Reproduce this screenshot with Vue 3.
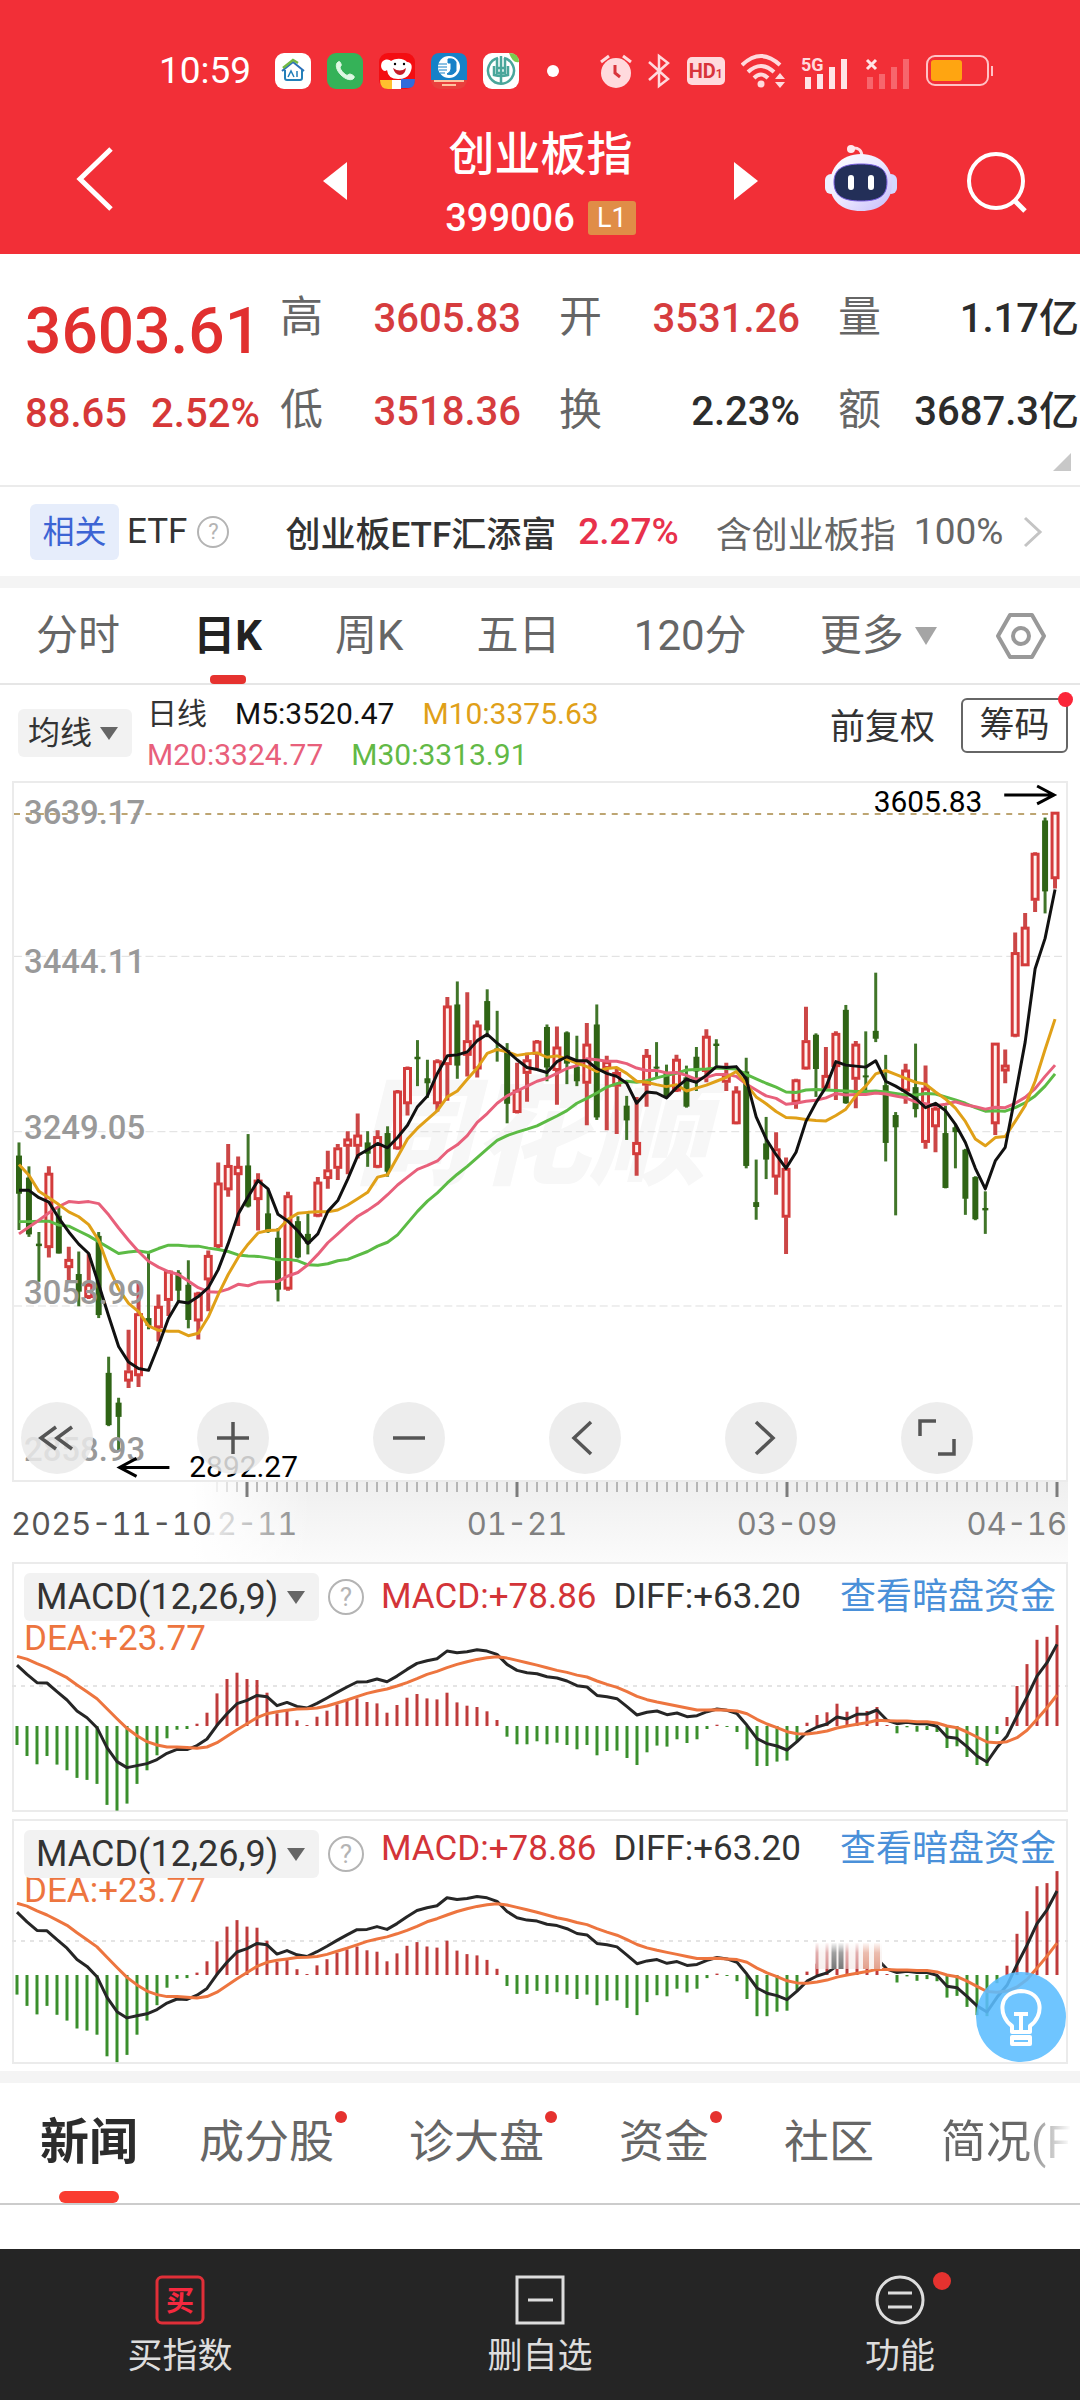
<script setup>
import { ref } from 'vue'

const STEP = 10
const FIRST = 5
const px = i => FIRST + i * STEP

// direction, high, body top, body bottom, low (chart levels, growing downwards)
const rawCandles = [
  ['g',755,782,860,934],['g',804,827,943,948],['g',938,962,967,1040],['r',804,818,970,990],['g',885,905,982,982],
  ['r',968,994,1011,1040],['g',978,1024,1060,1090],['r',983,1045,1072,1075],['g',938,946,1108,1114],['g',1193,1226,1333,1335],
  ['g',1277,1287,1316,1385],['r',1138,1222,1243,1257],['r',1040,1105,1232,1255],['g',978,1114,1130,1137],['r',1066,1090,1134,1162],
  ['r',1016,1018,1078,1110],['g',1016,1021,1058,1080],['g',996,1046,1118,1135],['r',1060,1063,1120,1158],['r',976,986,1036,1100],
  ['r',796,838,968,972],['r',758,802,852,866],['r',784,804,821,926],['g',738,802,886,888],['r',818,832,872,935],
  ['g',852,900,938,940],['g',930,950,1056,1080],['r',856,864,1055,1058],['g',906,916,990,992],['g',900,942,962,984],
  ['r',826,836,906,908],['r',772,811,829,850],['r',758,766,808,832],['r',732,748,763,820],['r',696,740,763,788],
  ['g',732,755,778,805],['r',730,743,806,808],['g',722,736,815,825],['r',648,650,768,770],['r',600,602,676,700],
  ['g',546,580,585,640],['g',586,624,634,664],['r',585,588,676,692],['r',458,476,596,670],['g',426,473,598,625],
  ['r',448,547,577,620],['r',506,515,605,622],['g',442,466,526,540],['g',486,563,568,590],['g',552,566,676,716],
  ['r',592,648,694,696],['r',572,586,614,672],['r',546,548,575,604],['g',514,519,602,630],['r',518,560,608,678],
  ['g',528,530,594,636],['g',537,600,630,640],['r',511,554,634,720],['g',473,514,704,709],['r',578,590,604,730],
  ['r',605,612,640,738],['g',660,680,710,750],['r',662,755,780,823],['r',564,577,638,682],['g',550,600,604,624],
  ['g',596,612,660,664],['r',576,585,650,652],['g',598,622,682,684],['g',560,580,610,650],['r',524,538,610,632],
  ['g',544,553,558,598],['r',592,618,632,650],['r',640,650,717,718],['g',582,610,803,808],['g',790,877,887,913],
  ['g',703,757,790,830],['r',734,768,826,862],['r',786,808,908,983],['r',625,627,673,686],['r',478,547,605,606],
  ['g',532,535,605,662],['r',560,618,644,648],['r',528,532,600,668],['g',474,484,675,676],['r',548,554,626,685],
  ['g',528,618,622,648],['g',408,527,543,550],['g',576,638,756,794],['g',693,699,724,904],['r',594,607,650,676],
  ['g',553,642,687,704],['r',598,644,755,768],['r',680,685,723,775],['g',680,736,848,849],['g',718,724,734,808],
  ['g',768,770,870,903],['g',824,826,912,914],['g',855,889,894,942],['r',552,552,717,740],['r',565,597,609,634],
  ['r',326,367,538,540],['r',286,315,394,394],['r',162,164,260,284],['g',91,97,242,287],['r',80,80,216,236]
]
const ma5 = [853,853,868,877,910,938,963,982,1045,1110,1172,1204,1217,1221,1170,1115,1080,1083,1070,1052,1015,962,902,866,833,850,902,916,936,962,942,896,874,830,782,770,757,766,745,720,682,660,614,578,576,570,547,534,552,568,586,602,606,612,590,580,588,588,604,614,620,634,675,652,654,664,643,626,632,618,600,602,600,625,703,748,780,808,775,712,674,642,590,597,599,601,588,630,640,652,665,684,675,690,718,755,808,850,793,765,660,550,400,338,238]
const ma10 = [800,822,855,868,882,897,907,923,955,1010,1055,1084,1101,1130,1139,1141,1141,1150,1145,1112,1066,1025,990,963,940,935,934,912,900,898,897,897,893,883,870,857,826,821,785,748,726,708,690,662,650,626,603,573,565,570,577,574,572,581,578,585,593,600,610,604,602,614,630,632,637,641,637,650,644,638,630,622,610,636,662,676,692,704,705,708,710,711,700,687,660,640,615,608,616,624,632,636,652,666,685,712,748,762,745,743,712,680,630,565,503]
const ma20 = [942,928,914,899,886,876,878,876,880,903,930,955,978,998,1010,1019,1025,1038,1052,1060,1061,1055,1045,1048,1041,1040,1039,1028,1021,1005,984,960,942,923,906,894,880,862,842,826,810,802,793,773,760,741,714,696,675,660,650,640,630,624,614,604,598,584,586,589,589,594,603,608,608,613,612,618,626,622,616,616,620,636,648,660,665,677,675,671,669,664,655,658,657,657,654,656,660,664,672,676,680,677,672,678,682,687,683,684,675,663,645,620,597]
const ma30 = [917,917,916,916,924,926,936,946,958,970,982,979,977,980,972,965,965,967,967,971,974,978,985,987,988,991,995,994,997,1005,1006,1003,997,994,986,978,967,959,944,920,896,875,858,838,820,804,786,768,751,741,734,728,721,711,701,690,675,665,654,642,635,630,632,629,623,618,614,607,606,605,603,604,605,616,625,634,642,652,653,648,647,648,649,650,651,651,650,652,655,658,658,655,656,662,668,675,684,691,690,691,684,674,660,640,615]

const level = v => Math.round((v * 0.4911 - 10) * 10) / 10
const candles = rawCandles.map(([dir, h, t, b, l], i) => ({
  dir, x: px(i), high: level(h), top: level(t), bottom: level(b), low: level(l)
}))
const line = (values, y) => values.map((v, i) => `${px(i)},${y(v)}`).join(' ')
const averages = [
  { color: '#5cbb45', points: line(ma30, level) },
  { color: '#e8607b', points: line(ma20, level) },
  { color: '#e0a018', points: line(ma10, level) },
  { color: '#111', points: line(ma5, level) }
]

const hist = [-57,-90,-115,-90,-116,-133,-156,-162,-174,-237,-254,-233,-174,-133,-88,-37,-11,-9,7,40,98,141,160,141,138,100,38,45,17,3,28,46,65,75,83,72,68,40,63,85,96,83,80,100,71,61,57,44,18,-32,-55,-55,-46,-55,-50,-57,-70,-57,-88,-75,-74,-96,-117,-79,-59,-62,-40,-51,-40,-9,4,-3,-18,-70,-120,-120,-107,-104,-45,10,33,41,67,43,58,45,57,3,-22,-4,-17,-12,-18,-66,-61,-93,-117,-120,-24,27,120,186,259,268,303]
const diff = [372,400,425,426,452,477,510,530,560,620,662,680,674,668,656,637,625,626,614,594,553,518,488,478,463,467,494,484,496,501,487,471,454,438,423,422,414,422,405,385,367,359,353,330,335,332,326,330,340,370,388,395,398,407,411,420,434,438,463,467,473,497,522,514,510,521,516,527,524,512,504,508,518,553,593,608,615,627,602,573,558,549,528,534,520,519,507,538,548,544,548,548,556,588,592,617,645,663,620,585,525,468,405,365,310]
const dea = [346,354,368,380,395,410,432,452,473,503,533,562,584,602,612,618,618,620,622,618,605,586,566,548,530,518,512,508,504,503,501,495,486,477,467,457,450,444,435,425,413,400,391,380,370,362,355,350,347,351,358,365,372,380,388,394,402,408,420,430,439,452,466,476,483,489,495,501,507,507,506,508,510,518,535,549,560,572,578,579,575,570,561,555,550,545,538,539,540,540,542,542,546,555,560,573,588,603,605,602,590,568,535,500,462]

const makeMacd = (id, height, zero, mid, k) => {
  const y = v => Math.round((zero + (v - 555) * k) * 10) / 10
  return {
    id, height, zero, mid,
    bars: hist.map((v, i) => ({ x: px(i), y: Math.round((zero - v * k) * 10) / 10, color: v > 0 ? '#bf3b3b' : '#3a8f2c' })),
    diff: line(diff, y),
    dea: line(dea, y)
  }
}
const macds = [makeMacd('first', 250, 164, 124, 0.333), makeMacd('second', 245, 156, 122, 0.343)]

const grid = [
  { label: '3639.17', y: 41 }, { label: '3444.11', y: 191 }, { label: '3249.05', y: 357 },
  { label: '3053.99', y: 523 }, { label: '2858.93', y: 681 }
]
const ticks = Array.from({ length: 85 }, (_, k) => k + 20).map(i => ({ x: px(i), major: (i - 23) % 27 === 0, o: i < 23 ? (i - 19) * 0.2 : 1 }))

const quotes = [
  { k: '高', v: '3605.83', up: true }, { k: '开', v: '3531.26', up: true }, { k: '量', v: '1.17亿' },
  { k: '低', v: '3518.36', up: true }, { k: '换', v: '2.23%' }, { k: '额', v: '3687.3亿' }
]
const periods = ['分时', '日K', '周K', '五日', '120分', '更多']
const period = ref('日K')
const news = [
  { t: '新闻' }, { t: '成分股', dot: true }, { t: '诊大盘', dot: true }, { t: '资金', dot: true }, { t: '社区' }, { t: '简况(F' }
]
const section = ref('新闻')
const tools = [
  { n: '最早', d: 'M35 25 L20 36 L35 47 M51 25 L36 36 L51 47' },
  { n: '放大', d: 'M20 36 H52 M36 20 V52' },
  { n: '缩小', d: 'M20 36 H52' },
  { n: '左移', d: 'M42 20 L25 36 L42 52' },
  { n: '右移', d: 'M31 20 L48 36 L31 52' },
  { n: '全屏', d: 'M19 34 V19 H35 M37 52 H53 V37' }
]
</script>

<template>
  <div class="page">
    <header class="top">
      <div class="status">
        <span class="time">10:59</span>
        <div class="apps">
          <svg viewBox="0 0 36 36"><rect width="36" height="36" rx="9" fill="#fff" /><path d="M7 18 L18 9 L29 18" fill="none" stroke="#2b70b8" stroke-width="2" /><path d="M8 15 L18 7 L23 10" fill="none" stroke="#72b944" stroke-width="2.500" /><path d="M10 17 V25 Q10 27 12 27 H25 Q27 27 27 25 V17" fill="none" stroke="#237fb9" stroke-width="2" /><path d="M13 24 L16 18 L19 24 M22 18 V24" fill="none" stroke="#237fb9" stroke-width="1.500" /></svg>
          <svg viewBox="0 0 36 36"><rect width="36" height="36" rx="9" fill="#35b258" /><path d="M11 9 C8 11 9 17 14 22 C19 27 25 28 27 25 C28 23 26 22 23 21 C21 21 21 23 19 22 C16 20 14 17 13 15 C13 13 15 13 14 11 C13 8 12 8 11 9Z" fill="#dff8e4" stroke="#dff8e4" /></svg>
          <svg viewBox="0 0 36 36"><rect width="36" height="36" rx="9" fill="#f40d12" /><path d="M3 9 C7 5 11 7 12 8 C18 4 26 6 28 9 C33 9 34 14 31 20 Q28 26 19 26 Q9 26 8 17 C5 20 0 15 3 9Z" fill="#fff" /><path d="M14 15 Q21 20 27 15 Q26 22 21 22 Q16 22 14 15Z" fill="#c71d28" /><circle cx="16" cy="11" r="1.200" /><circle cx="25" cy="11" r="1.200" /><path d="M1 27 H13 V36 H9 Q1 36 1 27Z" fill="#ffc02e" /><path d="M13 27 H22 V36 H13Z" fill="#fff" /><path d="M22 26 H36 Q36 36 28 35 H22Z" fill="#326cdc" /></svg>
          <svg viewBox="0 0 36 36"><rect width="36" height="36" rx="9" fill="#e8403d" /><path d="M0 27 V9 Q0 0 9 0 H27 Q36 0 36 9 V27Z" fill="#1681c8" /><circle cx="18" cy="14" r="11" fill="#fff" /><path d="M17 6 Q23 5 25 9 V18 Q22 23 16 21 Q20 19 20 16 V10 H17Z M7 11 H16 M7 14 H16 M8 17 H16 M9 20 H14" fill="#1681c8" stroke="#1681c8" stroke-width="1" /><path d="M3 28 H33 M11 32 H25" stroke="#ffc4a0" stroke-width="2" /></svg>
          <svg viewBox="0 0 36 36"><rect width="36" height="36" rx="9" fill="#fff" /><path d="M26 0 Q36 0 36 9 Q30 11 26 0Z" fill="#7acb4e" /><path d="M15 5 A13 13 0 1 0 21 5" fill="none" stroke="#4aa69b" stroke-width="2.500" /><path d="M14 5 V20 H22 V5 M18 3 V31 M11 13 V22 Q18 24 25 22 V13 M14 15 H22" fill="none" stroke="#4aa69b" stroke-width="2.500" /></svg>
        </div>
        <i class="more-dot"></i>
        <div class="signals">
          <svg width="32" height="36" viewBox="0 0 32 36"><circle cx="16" cy="20" r="15" fill="#ffdadd" /><path d="M1 9 L9 3 M23 3 L31 9" stroke="#ffdadd" stroke-width="3" /><path d="M15 12 V20 L20 24" fill="none" stroke="#d8343b" stroke-width="3" /></svg>
          <svg width="22" height="36" viewBox="0 0 22 36"><path d="M1 9 L20 26 L11 33 V3 L20 10 L1 27" fill="none" stroke="#ffdadd" stroke-width="2.500" /></svg>
          <span class="hd">HD<small>1</small></span>
          <svg width="44" height="36" viewBox="0 0 44 36"><path d="M1 12 Q20 -6 39 12 M7 19 Q20 7 33 19 M13 25 Q20 18 27 25" fill="none" stroke="#ffdadd" stroke-width="4" /><circle cx="20" cy="31" r="3.500" fill="#ffdadd" /><path d="M34 26 L39 20 L44 26Z M34 29 L39 35 L44 29Z" fill="#ffdadd" /></svg>
          <svg width="47" height="40" viewBox="0 -4 47 40"><text x="0" y="16" font-size="18" font-weight="700" fill="#ffdadd">5G</text><path d="M7 22 V34 M19 19 V34 M31 12 V34 M43 4 V34" stroke="#ffe4e6" stroke-width="6" /></svg>
          <svg width="45" height="40" viewBox="0 -4 45 40"><path d="M2 5 L11 14 M11 5 L2 14" stroke="#ffe4e6" stroke-width="3" /><path d="M5 22 V34 M17 19 V34 M29 12 V34 M41 4 V34" stroke="#f7666c" stroke-width="6" /></svg>
          <svg width="68" height="32" viewBox="0 0 68 32"><rect x="1" y="1" width="61" height="29" rx="8" fill="none" stroke="#ffc2c6" stroke-width="2" /><rect x="5" y="5" width="31" height="21" rx="3" fill="#ffa511" /><path d="M66 11 V21" stroke="#ffc2c6" stroke-width="2" /></svg>
        </div>
      </div>
      <nav class="bar">
        <button class="ib back" aria-label="返回"><svg width="38" height="66" viewBox="0 0 38 66"><path d="M35 3 L4 33 L35 63" fill="none" stroke="#fff" stroke-width="5" /></svg></button>
        <button class="ib prev" aria-label="上一个"><svg width="24" height="38" viewBox="0 0 24 38"><path d="M24 0 V38 L0 19Z" fill="#fff" /></svg></button>
        <div class="title">
          <h1>创业板指</h1>
          <p><span>399006</span><b>L1</b></p>
        </div>
        <button class="ib next" aria-label="下一个"><svg width="24" height="38" viewBox="0 0 24 38"><path d="M0 0 V38 L24 19Z" fill="#fff" /></svg></button>
        <button class="ib robot" aria-label="助手">
          <svg width="72" height="68" viewBox="0 0 72 68">
            <defs>
              <linearGradient id="shell" x1="0" y1="0" x2="1" y2="1"><stop offset="0" stop-color="#fff" /><stop offset="0.500" stop-color="#ece8ff" /><stop offset="1" stop-color="#c4bbfa" /></linearGradient>
            </defs>
            <path d="M27 4 Q37 3 37 13" fill="none" stroke="#ffdfe6" stroke-width="3" /><circle cx="26" cy="5" r="4" fill="#ffe9ee" />
            <rect x="0" y="30" width="12" height="20" rx="6" fill="#eef0ff" /><rect x="60" y="30" width="12" height="20" rx="6" fill="#d4d7ff" />
            <path d="M36 10 C56 10 67 24 67 40 C67 57 55 67 36 67 C17 67 5 57 5 40 C5 24 16 10 36 10Z" fill="url(#shell)" />
            <path d="M36 20 C54 20 62 25 62 38 C62 52 54 57 36 57 C18 57 9 52 9 38 C9 25 18 20 36 20Z" fill="#232f58" stroke="#7a5fe0" stroke-width="1" />
            <path d="M26 34 V43 M46 34 V43" stroke="#fff" stroke-width="6" stroke-linecap="round" />
          </svg>
        </button>
        <button class="ib search" aria-label="搜索"><svg width="62" height="62" viewBox="0 0 62 62"><circle cx="30" cy="30" r="27" fill="none" stroke="#fff" stroke-width="4" /><path d="M48 49 L59 60" stroke="#fff" stroke-width="5" /></svg></button>
      </nav>
    </header>

    <section class="quote">
      <div class="price">
        <strong>3603.61</strong>
        <p><span>88.65</span><span>2.52%</span></p>
      </div>
      <dl>
        <div v-for="q in quotes" :key="q.k"><dt>{{ q.k }}</dt><dd :class="{ up: q.up }">{{ q.v }}</dd></div>
      </dl>
      <i class="corner"></i>
    </section>

    <a class="etf" href="#etf">
      <span class="tag">相关</span><span class="kind">ETF</span><span class="help">?</span>
      <b>创业板ETF汇添富</b><span class="rise">2.27%</span>
      <span class="hold">含创业板指</span><span class="pct">100%</span>
      <svg width="20" height="32" viewBox="0 0 20 32"><path d="M2 2 L17 16 L2 30" fill="none" stroke="#c4c4c4" stroke-width="3" /></svg>
    </a>

    <nav class="periods">
      <button v-for="p in periods" :key="p" :class="{ on: p === period }" @click="period = p">{{ p }}<i v-if="p === '更多'" class="caret"></i></button>
      <button aria-label="设置"><svg width="50" height="48" viewBox="0 0 50 48"><path d="M14 3 H36 L48 24 L36 45 H14 L2 24Z" fill="none" stroke="#999" stroke-width="4" stroke-linejoin="round" /><circle cx="25" cy="24" r="8" fill="none" stroke="#999" stroke-width="4" /></svg></button>
    </nav>

    <section class="legend">
      <span class="pick small"><select aria-label="主图指标"><option>均线</option></select></span>
      <div class="ma">
        <p><b>日线</b><span>M5:3520.47</span><span class="m10">M10:3375.63</span></p>
        <p><span class="m20">M20:3324.77</span><span class="m30">M30:3313.91</span></p>
      </div>
      <button class="adj">前复权</button>
      <button class="chips">筹码<i class="dot"></i></button>
    </section>

    <section class="chart">
      <svg class="plot" viewBox="0 0 1056 700">
        <text x="342" y="394" class="mark">同花顺</text>
        <path d="M0 174 H1056 M0 350 H1056 M0 525 H1056" stroke="#dedede" stroke-width="1" stroke-dasharray="8 4" />
        <path d="M0 31 H1045" stroke="#bda572" stroke-width="2" stroke-dasharray="6 6" />
        <g v-for="c in candles" :key="c.x">
          <template v-if="c.dir === 'g'">
            <path :d="`M${c.x} ${c.high} V${c.low}`" stroke="#407529" stroke-width="3" />
            <rect :x="c.x - 3" :y="c.top" width="6" :height="Math.max(2, c.bottom - c.top)" fill="#2f6415" />
          </template>
          <template v-else>
            <path :d="`M${c.x} ${c.high} V${c.top} M${c.x} ${c.bottom} V${c.low}`" stroke="#cb4646" stroke-width="4" />
            <rect :x="c.x - 3" :y="c.top + 1" width="6" :height="Math.max(3, c.bottom - c.top - 2)" fill="#fff2ef" stroke="#d33b3b" stroke-width="3" />
          </template>
        </g>
        <polyline v-for="a in averages" :key="a.color" :points="a.points" fill="none" :stroke="a.color" stroke-width="3" stroke-linejoin="round" />
        <text v-for="g in grid" :key="g.label" x="10" :y="g.y" class="level">{{ g.label }}</text>
        <text x="863" y="29" class="peak">3605.83</text>
        <path d="M994 12 H1044 M1027 3 L1044 12 L1027 21" fill="none" stroke="#000" stroke-width="3" />
        <text x="176" y="697" class="peak">2892.27</text>
        <path d="M156 687 H106 M123 678 L106 687 L123 696" fill="none" stroke="#000" stroke-width="3" />
      </svg>
      <div class="tools">
        <button v-for="t in tools" :key="t.n" :aria-label="t.n"><svg viewBox="0 0 72 72"><path :d="t.d" fill="none" stroke="#555" stroke-width="3.500" /></svg></button>
      </div>
    </section>
    <svg class="axis" viewBox="0 0 1056 80">
      <defs>
        <linearGradient id="shade" x1="0" y1="0" x2="0" y2="1"><stop offset="0" stop-color="#efefef" /><stop offset="1" stop-color="#fbfbfb" /></linearGradient>
        <linearGradient id="veil" x1="0" y1="0" x2="1" y2="0"><stop offset="0" stop-color="#fff" /><stop offset="0.600" stop-color="#fff" /><stop offset="1" stop-color="#fff" stop-opacity="0" /></linearGradient>
      </defs>
      <rect x="0" y="0" width="1056" height="80" fill="url(#shade)" />
      <text x="235" y="53" text-anchor="middle">12-11</text>
      <rect x="0" y="0" width="300" height="80" fill="url(#veil)" />
      <path v-for="t in ticks" :key="t.x" :d="`M${t.x} 0 V${t.major ? 15 : 10}`" :stroke-width="t.major ? 3 : 1" stroke="#7c7c7c" :opacity="t.o" />
      <text x="-1" y="53" class="start">2025-11-10</text>
      <text x="505" y="53" text-anchor="middle">01-21</text>
      <text x="775" y="53" text-anchor="middle">03-09</text>
      <text x="1055" y="53" text-anchor="end">04-16</text>
    </svg>

    <section v-for="m in macds" :key="m.id" class="macd" :class="m.id">
      <div class="head">
        <span class="pick"><select :aria-label="'副图指标 ' + m.id"><option>MACD(12,26,9)</option></select></span>
        <span class="help big">?</span>
        <span class="hv red">MACD:+78.86</span>
        <span class="hv">DIFF:+63.20</span>
        <a class="hv" href="#fund">查看暗盘资金</a>
      </div>
      <p class="dea">DEA:+23.77</p>
      <svg class="osc" :viewBox="`0 0 1056 ${m.height}`">
        <path :d="`M0 ${m.mid} H1056`" stroke="#e4e4e4" stroke-width="2" stroke-dasharray="4 5" />
        <path v-for="b in m.bars" :key="b.x" :d="`M${b.x} ${m.zero} V${b.y}`" :stroke="b.color" stroke-width="3" />
        <polyline :points="m.diff" fill="none" stroke="#262626" stroke-width="3" stroke-linejoin="round" />
        <polyline :points="m.dea" fill="none" stroke="#ed753f" stroke-width="3" stroke-linejoin="round" />
        <g v-if="m.id === 'second'">
          <defs><linearGradient id="fade" x1="0" y1="0" x2="0" y2="1"><stop offset="0" stop-color="#fff" /><stop offset="0.400" stop-color="#fff" stop-opacity="0.300" /><stop offset="1" stop-color="#fff" stop-opacity="0" /></linearGradient></defs>
          <rect x="804" y="124" width="66" height="26" fill="#f8f0ee" />
          <path d="M805 124 V150 M815 124 V150 M835 124 V150 M845 124 V150" stroke="#d58e8e" stroke-width="3" />
          <path d="M822 124 V150 M829 124 V150" stroke="#777" stroke-width="5" />
          <path d="M854 124 V150 M865 124 V150" stroke="#e3a08c" stroke-width="6" />
          <rect x="802" y="123" width="70" height="27" fill="url(#fade)" />
        </g>
      </svg>
      <button v-if="m.id === 'second'" class="bulb" aria-label="提示">
        <svg viewBox="0 0 90 90"><path d="M36 60 V54 C22 44 22 20 45 19 C68 20 68 44 54 54 V60Z M36 65 H54 V72 H36Z M38 42 H52 M45 42 V60 M36 66 H54" fill="none" stroke="#fff" stroke-width="4" stroke-linejoin="round" /></svg>
      </button>
    </section>

    <nav class="news">
      <button v-for="n in news" :key="n.t" :class="{ on: n.t === section }" @click="section = n.t">{{ n.t }}<i v-if="n.dot" class="dot"></i></button>
    </nav>
    <div class="feed"></div>

    <footer>
      <button>
        <svg width="50" height="50" viewBox="0 0 50 50"><rect x="2" y="2" width="46" height="46" rx="5" fill="none" stroke="#e02f38" stroke-width="3" /><text x="25" y="36" text-anchor="middle" font-size="28" font-weight="700" fill="#f5293f">买</text></svg>
        <span>买指数</span>
      </button>
      <button>
        <svg width="50" height="50" viewBox="0 0 50 50"><path d="M2 2 H48 V48 H2Z M13 25 H38" fill="none" stroke="#ddd" stroke-width="3" /></svg>
        <span>删自选</span>
      </button>
      <button>
        <svg width="52" height="50" viewBox="0 0 52 50"><circle cx="26" cy="25" r="23" fill="none" stroke="#ddd" stroke-width="3" /><path d="M14 18 H38 M14 32 H38" stroke="#ddd" stroke-width="3" /></svg>
        <span>功能</span><i class="dot"></i>
      </button>
    </footer>
  </div>
</template>

<style>
body { margin: 0; background: #fff; }
</style>

<style scoped>
.page { font-family: Roboto, "Noto Sans CJK SC", sans-serif; color: #333; background: #fff; overflow: hidden; }
.page * { box-sizing: border-box; }
svg { display: block; flex: none; }
p, h1, dl, dd { margin: 0; }
button { border: 0; padding: 0; background: none; font: inherit; color: inherit; white-space: nowrap; }
a { text-decoration: none; color: inherit; }

.top { background: #f22f37; color: #fff; height: 254px; }
.status { display: flex; align-items: center; height: 142px; padding: 0 86px 0 159px; }
.time { width: 116px; font-size: 37px; line-height: 44px; }
.apps { display: flex; gap: 16px; }
.apps svg { width: 36px; height: 36px; }
.more-dot { width: 12px; height: 12px; border-radius: 50%; background: #fff; margin-left: 28px; }
.signals { display: flex; align-items: center; justify-content: space-between; flex: 1; margin-left: 41px; }
.hd { width: 38px; height: 28px; border-radius: 5px; background: #ffdadd; color: #d8343b; font-size: 20px; line-height: 28px; font-weight: 700; text-align: center; }
.hd small { font-size: 12px; }
.bar { display: flex; align-items: flex-start; padding: 0 52px 0 76px; }
.ib { margin-top: 4px; }
.prev { margin-left: 209px; margin-top: 20px; }
.title { flex: 1; margin-top: -17px; text-align: center; }
.title h1 { font-size: 46px; line-height: 58px; font-weight: 500; }
.title p { display: flex; justify-content: center; align-items: center; gap: 13px; font-size: 38px; line-height: 70px; font-weight: 500; }
.title b { width: 48px; background: #e08d47; border-radius: 3px; font-size: 27px; line-height: 34px; font-weight: 400; }
.next { margin-top: 20px; }
.robot { margin: 2px 69px 0 67px; }
.search { margin-top: 9px; }

.quote { position: relative; display: flex; height: 231px; padding: 24px 1px 0 25px; }
.price { width: 255px; color: #e1302f; white-space: nowrap; }
.price strong { display: block; font-size: 64px; line-height: 108px; font-weight: 500; }
.price p { display: flex; gap: 24px; font-size: 40px; line-height: 56px; font-weight: 500; color: #d63838; }
.quote dl { flex: 1; display: grid; grid-template-columns: repeat(3, 1fr); column-gap: 38px; grid-auto-rows: 93px; margin-top: -6px; }
.quote dl div { display: flex; justify-content: space-between; align-items: center; font-size: 40px; line-height: 56px; white-space: nowrap; }
.quote dt { font-size: 43px; color: #666; margin-top: -4px; }
.quote dd { font-weight: 500; color: #2c2c2c; }
.quote dd.up { color: #d63c3e; }
.corner { position: absolute; right: 9px; bottom: 14px; border-left: 18px solid transparent; border-bottom: 18px solid #c8c8c8; }

.etf { display: flex; align-items: center; height: 103px; padding: 0 37px 0 30px; border-top: 2px solid #ebebeb; border-bottom: 12px solid #f4f4f4; font-size: 37px; white-space: nowrap; }
.tag { width: 89px; line-height: 56px; text-align: center; border-radius: 6px; background: #e6edfb; color: #3c64d4; font-size: 32px; }
.kind { margin-left: 8px; font-size: 35px; }
.help { width: 32px; height: 32px; border: 2px solid #b4b4b4; border-radius: 50%; color: #b4b4b4; font-size: 22px; line-height: 28px; text-align: center; margin-left: 10px; flex: none; }
.etf b { font-size: 35px; font-weight: 500; margin-left: 56px; }
.rise { color: #e8314c; font-weight: 500; margin-left: 22px; }
.hold { color: #666; font-size: 36px; margin-left: 37px; }
.pct { color: #666; margin-left: 18px; margin-right: auto; }

.periods { display: flex; justify-content: space-between; align-items: center; height: 97px; padding: 0 34px 0 36px; border-bottom: 2px solid #e6e6e6; font-size: 42px; color: #666; }
.periods button { position: relative; display: flex; align-items: center; height: 96px; line-height: 56px; }
.periods .on { color: #222; font-weight: 700; }
.periods .on::after { content: ""; position: absolute; left: 50%; bottom: 0; width: 36px; height: 9px; margin-left: -18px; border-radius: 4px; background: #e6322f; }
.caret { border: 11px solid transparent; border-top: 18px solid #a5a5a5; border-bottom: 0; margin: 0 -14px 0 11px; }

.legend { display: flex; align-items: flex-start; height: 96px; padding: 13px 12px 0 18px; }
.pick { position: relative; display: inline-flex; background: #f2f2f2; border-radius: 6px; }
.pick::after { content: ""; position: absolute; right: 14px; top: 18px; border: 9px solid transparent; border-top: 13px solid #666; border-bottom: 0; pointer-events: none; }
.pick select { appearance: none; border: 0; background: none; font-family: inherit; font-size: 36px; line-height: 48px; height: 48px; color: #333; padding: 0 40px 0 12px; margin: 0; }
.pick.small { margin-top: 11px; }
.pick.small select { width: 114px; font-size: 32px; padding: 0 0 0 10px; }
.ma { margin: -5px 0 0 15px; font-size: 30px; line-height: 41px; white-space: nowrap; color: #111; }
.ma p { display: flex; gap: 28px; }
.ma b { font-weight: 400; color: #333; }
.m10 { color: #e0a018; }
.m20 { color: #e8607b; }
.m30 { color: #62b946; }
.adj { margin-left: auto; font-size: 35px; line-height: 60px; }
.chips { position: relative; margin-left: 26px; width: 107px; height: 55px; border: 2px solid #666; border-radius: 6px; font-size: 35px; line-height: 51px; }
.dot { position: absolute; width: 12px; height: 12px; border-radius: 50%; background: #e5322f; }
.chips .dot { width: 15px; height: 15px; right: -7px; top: -8px; background: #fb2639; }

.chart { position: relative; margin: 0 12px; border: 2px solid #ebebeb; }
.plot { width: 100%; }
.mark { font-size: 118px; font-weight: 900; font-style: italic; fill: #f7f7f7; }
.level { font-size: 33px; font-weight: 500; fill: #999; }
.peak { font-size: 30px; fill: #000; }
.tools { position: absolute; left: 7px; bottom: 6px; right: 93px; display: flex; justify-content: space-between; }
.tools button { width: 72px; height: 72px; border-radius: 50%; background: rgba(234, 234, 234, 0.850); }
.tools svg { width: 72px; height: 72px; }
.axis { width: calc(100% - 24px); margin: 0 12px; overflow: visible; }
.axis text { font-family: Inter, sans-serif; font-size: 31px; font-variant-numeric: tabular-nums; fill: #808080; }
.axis .start { fill: #555; }

.macd { position: relative; margin: 0 12px 7px; border: 2px solid #ebebeb; height: 250px; }
.macd.second { height: 245px; }
.head { display: flex; align-items: flex-start; padding: 9px 10px 0; font-size: 35px; line-height: 48px; white-space: nowrap; }
.help.big { width: 36px; height: 36px; font-size: 26px; line-height: 32px; margin: 6px 0 0 9px; }
.hv { margin-left: 17px; }
.red { color: #d33438; }
.head a { margin-left: auto; color: #4a90d9; font-size: 36px; }
.dea { padding-left: 10px; font-size: 35px; line-height: 36px; color: #ed753f; }
.second .hv, .second .dea { margin-top: -5px; }
.osc { position: absolute; left: -2px; top: -2px; width: calc(100% + 4px); pointer-events: none; }
.bulb { position: absolute; right: 0; bottom: 0; width: 90px; height: 90px; border-radius: 50%; background: rgba(91, 189, 255, 0.880); }

.news { display: flex; align-items: center; gap: 75px; height: 134px; padding: 0 0 0 40px; border-top: 12px solid #f4f4f4; border-bottom: 2px solid #ccc; font-size: 45px; color: #666; overflow: hidden; }
.news button { position: relative; height: 120px; line-height: 120px; }
.news button:last-child { margin-left: -8px; background: linear-gradient(90deg, #666 60%, #fff 100%); background-clip: text; color: transparent; }
.news .on { font-size: 49px; font-weight: 700; color: #2c2c2c; margin-right: -14px; }
.news .on::after { content: ""; position: absolute; left: 50%; bottom: 0; width: 60px; height: 12px; margin-left: -30px; border-radius: 6px; background: #fa3c30; }
.news .dot { right: -13px; top: 28px; }
.feed { height: 44px; }

footer { display: flex; justify-content: space-around; background: #252525; color: #ddd; height: 153px; padding-top: 26px; }
footer button { position: relative; flex: 1; display: flex; flex-direction: column; align-items: center; font-size: 35px; line-height: 64px; }
footer .dot { width: 18px; height: 18px; left: 50%; top: -3px; margin-left: 33px; }
</style>
